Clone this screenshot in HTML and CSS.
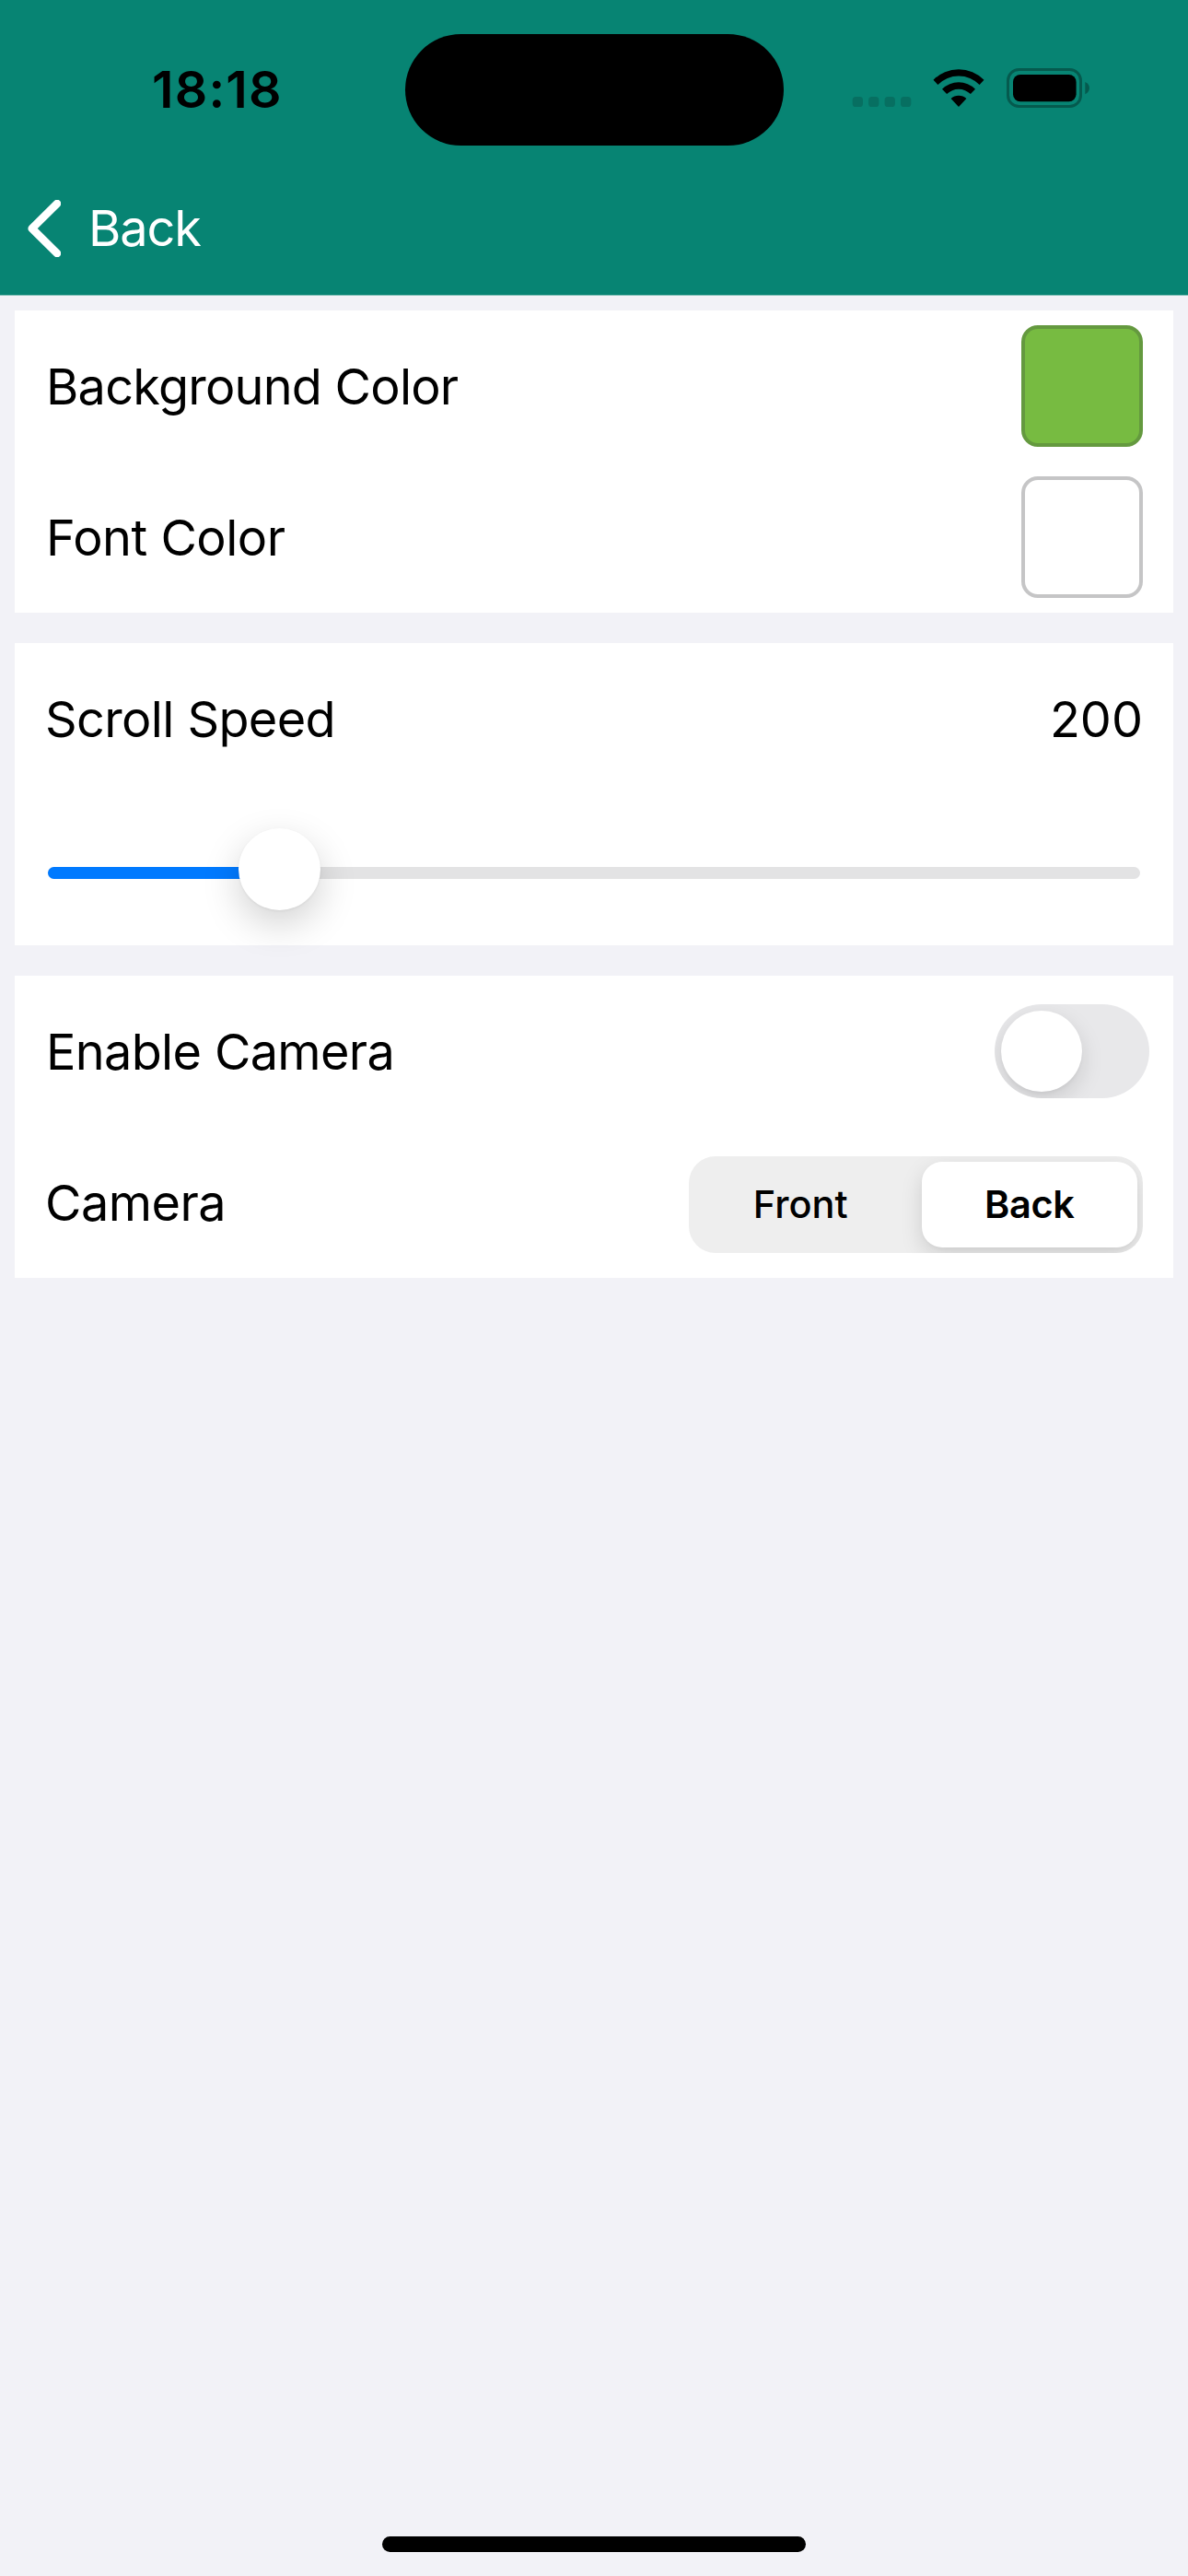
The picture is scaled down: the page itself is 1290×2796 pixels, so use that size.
FILE: index.html
```html
<!DOCTYPE html>
<html lang="en">
<head>
<meta charset="utf-8">
<title>Settings</title>
<link rel="stylesheet" href="styles.css">
</head>
<body>
<header class="header">
  <div class="status">
    <div class="time">18:18</div>
    <div class="island"></div>
    <svg class="status-icons" viewBox="0 0 258 43" width="258" height="43">
      <g fill="#076f61"><rect x="0.7" y="31" width="11.3" height="11" rx="3.6"/><rect x="18.1" y="31" width="11.3" height="11" rx="3.6"/><rect x="35.6" y="31" width="11.3" height="11" rx="3.6"/><rect x="53" y="31" width="11.3" height="11" rx="3.6"/></g>
      <path d="M88.5 12.8a38.5 38.5 0 0 1 55 0l-4.9 5.2a31.5 31.5 0 0 0-45.2 0zM98 22.8a25.5 25.5 0 0 1 36 0l-5.1 5.3a18.4 18.4 0 0 0-25.8 0zM107.6 33a12.4 12.4 0 0 1 16.8 0l-8.4 9z"/>
      <rect x="169.5" y="1.5" width="79" height="40" rx="12" fill="none" stroke="#055a4e" stroke-width="3"/>
      <rect x="175" y="7" width="68.6" height="29.3" rx="8"/>
      <path d="M253.3 15c6.2 2.5 6.2 10.7 0 13.2z" fill="#055a4e"/>
    </svg>
  </div>
  <nav class="nav">
    <svg class="chevron" viewBox="0 0 36 62" width="36" height="62"><path d="M32 4L4.7 31L32 58" fill="none" stroke="#fff" stroke-width="8.6" stroke-linecap="round" stroke-linejoin="round"/></svg>
    <span class="nav-title">Back</span>
  </nav>
</header>
<main class="page">
  <section class="card">
    <div class="row"><span class="label background">Background Color</span><span class="swatch green"></span></div>
    <div class="row"><span class="label font-color">Font Color</span><span class="swatch white"></span></div>
  </section>
  <section class="card">
    <div class="row"><span class="label speed">Scroll Speed</span><span class="value">200</span></div>
    <div class="row"><div class="slider"><div class="slider-fill"></div><div class="slider-knob"></div></div></div>
  </section>
  <section class="card">
    <div class="row row-switch"><span class="label enable">Enable Camera</span><div class="switch"><div class="switch-knob"></div></div></div>
    <div class="row"><span class="label camera">Camera</span>
      <div class="segments"><div class="segment front">Front</div><div class="segment selected">Back</div></div>
    </div>
  </section>
</main>
<footer class="home"><div class="home-bar"></div></footer>
</body>
</html>
```
FILE: styles.css
```css
* { box-sizing: border-box; }
body { margin: 0; min-height: 2796px; display: flex; flex-direction: column; background: #f2f2f7; color: #000; font-family: Inter, "Liberation Sans", sans-serif; }
.header { height: 321px; background: #078473; border-bottom: 1px solid #84c1b8; }
.status { height: 176px; padding: 18px 107px 0 0; display: flex; align-items: center; }
.time { width: 439.5px; padding-left: 165px; font-size: 55.5px; font-weight: 600; line-height: 64px; letter-spacing: 1.2px; }
.island { width: 411px; height: 121px; border-radius: 60.5px; background: #000; }
.status-icons { margin: -3px 0 0 auto; }
.nav { height: 144px; padding-left: 30px; display: flex; align-items: center; gap: 30px; color: #fff; font-size: 54px; line-height: 64px; letter-spacing: -1.1px; }
.page { flex: 1; padding: 16px; display: flex; flex-direction: column; gap: 33px; }
.card { background: #fff; }
.row { height: 164px; padding: 0 33px 0 34px; display: flex; align-items: center; justify-content: space-between; }
.row-switch { padding-right: 26.5px; }
.label, .value { padding-top: 2px; font-size: 54px; line-height: 64px; }
.background { letter-spacing: -0.76px; }
.font-color { letter-spacing: -0.5px; }
.speed { margin-left: -1px; letter-spacing: -0.61px; }
.enable { letter-spacing: -0.66px; }
.camera { margin-left: -1px; letter-spacing: -0.52px; }
.swatch { width: 132px; height: 132px; border: 4px solid; border-radius: 18px; }
.green { background: #77bb41; border-color: #64993f; }
.white { background: #fff; border-color: #c5c5c6; }
.slider { position: relative; flex: 1; height: 13px; margin: 7px 3.5px 0 2px; border-radius: 6.5px; background: #e3e3e4; }
.slider-fill { width: 252px; height: 100%; border-radius: 6.5px; background: #007aff; }
.slider-knob { position: absolute; left: 207px; top: -42px; width: 89px; height: 89px; border-radius: 50%; background: #fff; box-shadow: 0 1px 3px rgba(0,0,0,.06), 0 15px 40px rgba(0,0,0,.18); }
.switch { width: 168px; height: 102px; padding: 6.5px 7px; border-radius: 51px; background: #e8e8ea; overflow: hidden; }
.switch-knob { width: 88.5px; height: 88.5px; border-radius: 50%; background: #fff; box-shadow: 0 9px 24px rgba(0,0,0,.13), 0 3px 3px rgba(0,0,0,.03); }
.segments { width: 493px; height: 105px; margin-top: 4px; padding: 6px 6.5px; display: grid; grid-template-columns: 1fr 233.5px; column-gap: 14px; border-radius: 29px; background: #eee; overflow: hidden; }
.segment { display: flex; align-items: center; justify-content: center; font-size: 41.5px; font-weight: 500; line-height: 50px; }
.front { padding-right: 3px; }
.selected { border-radius: 22px; background: #fff; font-weight: 600; letter-spacing: -0.4px; box-shadow: 0 9px 24px rgba(0,0,0,.13), 0 2px 4px rgba(0,0,0,.03); }
.home { height: 43px; display: flex; justify-content: center; }
.home-bar { width: 460px; height: 17px; border-radius: 8.5px; background: #000; }
```
